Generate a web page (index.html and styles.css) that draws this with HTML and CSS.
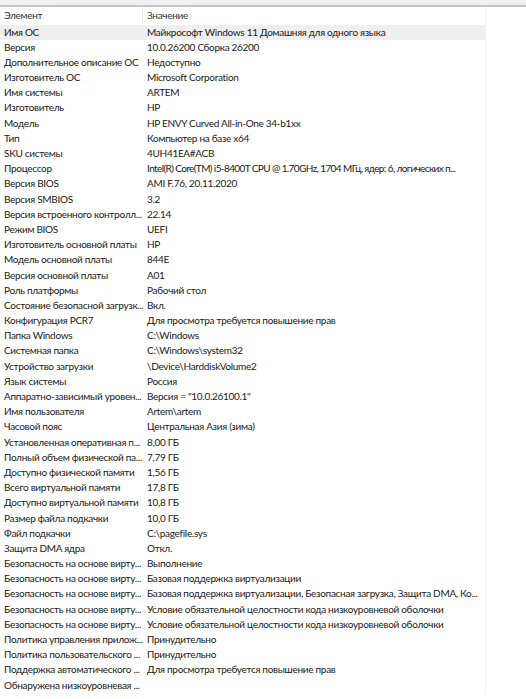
FILE: index.html
```html
<!DOCTYPE html>
<html lang="ru">
<head>
<meta charset="utf-8">
<link rel="stylesheet" href="styles.css">
</head>
<body>
<div class="topband"></div>
<div class="topline"></div>
<div class="list">
  <div class="row head"><div class="c1">Элемент</div><div class="c2">Значение</div></div>
  <div class="row sel"><div class="c1">Имя ОС</div><div class="c2">Майкрософт Windows 11 Домашняя для одного языка</div></div>
  <div class="row"><div class="c1">Версия</div><div class="c2">10.0.26200 Сборка 26200</div></div>
  <div class="row"><div class="c1">Дополнительное описание ОС</div><div class="c2">Недоступно</div></div>
  <div class="row"><div class="c1">Изготовитель ОС</div><div class="c2">Microsoft Corporation</div></div>
  <div class="row"><div class="c1">Имя системы</div><div class="c2">ARTEM</div></div>
  <div class="row"><div class="c1">Изготовитель</div><div class="c2">HP</div></div>
  <div class="row"><div class="c1">Модель</div><div class="c2">HP ENVY Curved All-in-One 34-b1xx</div></div>
  <div class="row"><div class="c1">Тип</div><div class="c2">Компьютер на базе x64</div></div>
  <div class="row"><div class="c1">SKU системы</div><div class="c2">4UH41EA#ACB</div></div>
  <div class="row"><div class="c1">Процессор</div><div class="c2 tight">Intel(R) Core(TM) i5-8400T CPU @ 1.70GHz, 1704 МГц, ядер: 6, логических п...</div></div>
  <div class="row"><div class="c1">Версия BIOS</div><div class="c2">AMI F.76, 20.11.2020</div></div>
  <div class="row"><div class="c1">Версия SMBIOS</div><div class="c2">3.2</div></div>
  <div class="row"><div class="c1">Версия встроенного контролл...</div><div class="c2">22.14</div></div>
  <div class="row"><div class="c1">Режим BIOS</div><div class="c2">UEFI</div></div>
  <div class="row"><div class="c1">Изготовитель основной платы</div><div class="c2">HP</div></div>
  <div class="row"><div class="c1">Модель основной платы</div><div class="c2">844E</div></div>
  <div class="row"><div class="c1">Версия основной платы</div><div class="c2">A01</div></div>
  <div class="row"><div class="c1">Роль платформы</div><div class="c2">Рабочий стол</div></div>
  <div class="row"><div class="c1">Состояние безопасной загрузк...</div><div class="c2">Вкл.</div></div>
  <div class="row"><div class="c1">Конфигурация PCR7</div><div class="c2">Для просмотра требуется повышение прав</div></div>
  <div class="row"><div class="c1">Папка Windows</div><div class="c2">C:\Windows</div></div>
  <div class="row"><div class="c1">Системная папка</div><div class="c2">C:\Windows\system32</div></div>
  <div class="row"><div class="c1">Устройство загрузки</div><div class="c2">\Device\HarddiskVolume2</div></div>
  <div class="row"><div class="c1">Язык системы</div><div class="c2">Россия</div></div>
  <div class="row"><div class="c1">Аппаратно-зависимый уровен...</div><div class="c2">Версия = "10.0.26100.1"</div></div>
  <div class="row"><div class="c1">Имя пользователя</div><div class="c2">Artem\artem</div></div>
  <div class="row"><div class="c1">Часовой пояс</div><div class="c2">Центральная Азия (зима)</div></div>
  <div class="row"><div class="c1">Установленная оперативная п...</div><div class="c2">8,00 ГБ</div></div>
  <div class="row"><div class="c1">Полный объем физической па...</div><div class="c2">7,79 ГБ</div></div>
  <div class="row"><div class="c1">Доступно физической памяти</div><div class="c2">1,56 ГБ</div></div>
  <div class="row"><div class="c1">Всего виртуальной памяти</div><div class="c2">17,8 ГБ</div></div>
  <div class="row"><div class="c1">Доступно виртуальной памяти</div><div class="c2">10,8 ГБ</div></div>
  <div class="row"><div class="c1">Размер файла подкачки</div><div class="c2">10,0 ГБ</div></div>
  <div class="row"><div class="c1">Файл подкачки</div><div class="c2">C:\pagefile.sys</div></div>
  <div class="row"><div class="c1">Защита DMA ядра</div><div class="c2">Откл.</div></div>
  <div class="row"><div class="c1">Безопасность на основе вирту...</div><div class="c2">Выполнение</div></div>
  <div class="row"><div class="c1">Безопасность на основе вирту...</div><div class="c2">Базовая поддержка виртуализации</div></div>
  <div class="row"><div class="c1">Безопасность на основе вирту...</div><div class="c2">Базовая поддержка виртуализации, Безопасная загрузка, Защита DMA, Ко...</div></div>
  <div class="row"><div class="c1">Безопасность на основе вирту...</div><div class="c2">Условие обязательной целостности кода низкоуровневой оболочки</div></div>
  <div class="row"><div class="c1">Безопасность на основе вирту...</div><div class="c2">Условие обязательной целостности кода низкоуровневой оболочки</div></div>
  <div class="row"><div class="c1">Политика управления прилож...</div><div class="c2">Принудительно</div></div>
  <div class="row"><div class="c1">Политика пользовательского ...</div><div class="c2">Принудительно</div></div>
  <div class="row"><div class="c1">Поддержка автоматического ...</div><div class="c2">Для просмотра требуется повышение прав</div></div>
  <div class="row"><div class="c1">Обнаружена низкоуровневая ...</div><div class="c2"></div></div>
</div>
</body>
</html>
```

FILE: styles.css
```css
html, body {
  margin: 0;
  padding: 0;
  background: #ffffff;
}
body {
  font-family: "Lato", "Noto Sans", sans-serif;
  font-size: 10px;
  letter-spacing: -0.3px;
  color: #1a1a1a;
  width: 526px;
  height: 699px;
  overflow: hidden;
}
.topband {
  height: 5px;
  background: #f1f1f1;
}
.topline {
  height: 2px;
  background: #c6c6c6;
}
.list {
  width: 485px;
  border-right: 1px solid #f0f0f0;
}
.row {
  display: grid;
  grid-template-columns: 143px 342px;
  height: 15.19px;
  line-height: 15.19px;
  white-space: nowrap;
}
.row.head {
  height: 17.5px;
  line-height: 17px;
  color: #333333;
}
.row.head .c1 {
  border-right: 1px solid #ececec;
}
.row.sel {
  background: #efefef;
}
.c1, .c2 {
  padding-left: 4px;
  overflow: hidden;
  text-overflow: clip;
}
.c2.tight {
  letter-spacing: -0.6px;
}
```
